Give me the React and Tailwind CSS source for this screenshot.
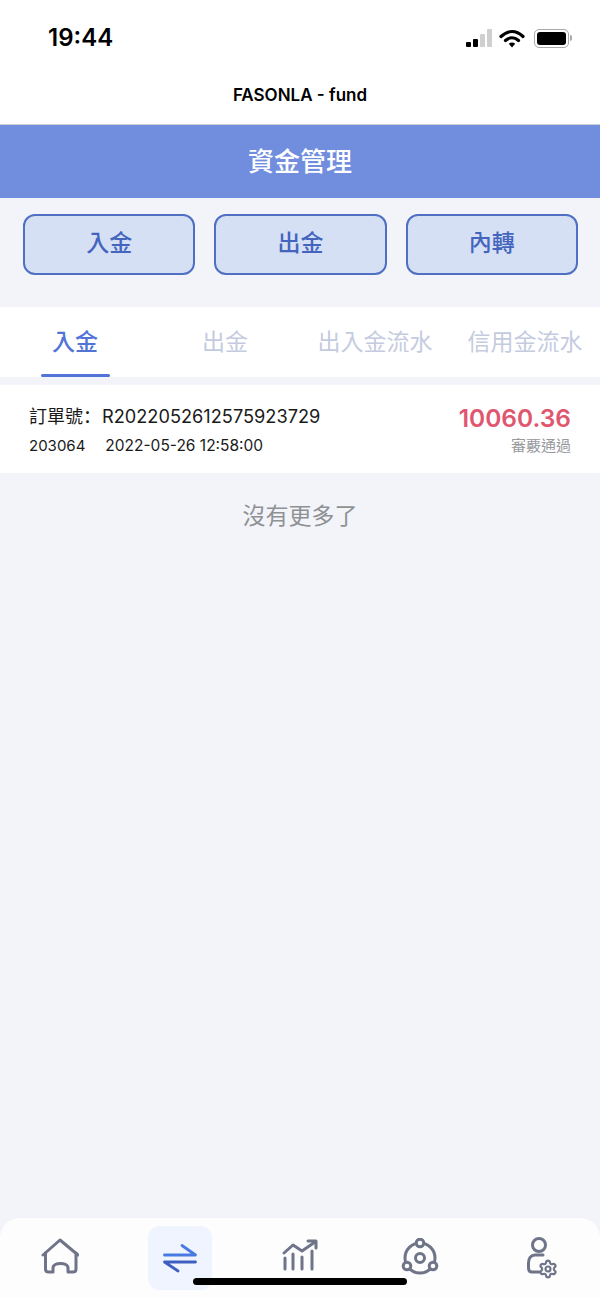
import { Settings } from "lucide-react";

function StatusIcons() {
  return (
    <div className="flex items-center gap-[5px]">
      <div className="flex items-end gap-[2px]">
        <div className="h-[5px] w-[5px] rounded-[1px] bg-black" />
        <div className="h-[8px] w-[5px] rounded-[1px] bg-black" />
        <div className="h-[13px] w-[5px] rounded-[1px] bg-[#cfcfcf]" />
        <div className="h-[18px] w-[5px] rounded-[1px] bg-[#cfcfcf]" />
      </div>
      <svg width="26" height="19" viewBox="0 0 26 19" className="ml-[2px]">
        <path d="M2 7.5C9 1 17 1 24 7.5" fill="none" stroke="#000" strokeWidth="3.2" strokeLinecap="round" />
        <path d="M6.5 11.5C10.5 8 15.5 8 19.5 11.5" fill="none" stroke="#000" strokeWidth="3.2" strokeLinecap="round" />
        <path d="M9.8 14.8C12 13 14 13 16.2 14.8L13 18.5Z" fill="#000" />
      </svg>
      <div className="ml-[4px] flex items-center">
        <div className="h-[19px] w-[35px] rounded-[5px] border border-[#a9a9a9] p-[2px]">
          <div className="h-full w-full rounded-[3px] bg-black" />
        </div>
        <div className="ml-[1px] h-[6px] w-[2px] rounded-r-sm bg-[#a9a9a9]" />
      </div>
    </div>
  );
}

function HomeIcon() {
  return (
    <svg width="38" height="38" viewBox="0 0 38 38" fill="none" stroke="#6f7488" strokeWidth="3" strokeLinecap="round" strokeLinejoin="round">
      <path d="M2 18L19 3L37 18" />
      <path d="M4.5 16V32Q4.5 35 7.5 35H12V31C12 25 27 25 27 31V35H32Q35 35 35 32V16" />
    </svg>
  );
}

function SwapIcon() {
  return (
    <svg width="34" height="30" viewBox="0 0 34 30" fill="none" strokeWidth="2.8" strokeLinecap="round" strokeLinejoin="round">
      <path d="M1.5 12H32.5L19 2.5" stroke="#4a7ae0" />
      <path d="M32.5 19H1.5L15 28" stroke="#3f5fc0" />
    </svg>
  );
}

function ChartIcon() {
  return (
    <svg width="38" height="36" viewBox="0 0 38 36" fill="none" stroke="#6f7488" strokeWidth="3" strokeLinecap="round" strokeLinejoin="round">
      <path d="M3 15L12 7L21 13L34 4" />
      <path d="M27 3H35V10" />
      <path d="M4 20V31M12 16V31M21 19V31M31 13V31" />
    </svg>
  );
}

function CircleIcon() {
  return (
    <svg width="38" height="38" viewBox="0 0 38 38" fill="none" stroke="#6f7488" strokeWidth="3">
      <circle cx="19" cy="20" r="15" />
      <circle cx="19" cy="20" r="4.5" />
      <circle cx="19" cy="5" r="3.8" fill="#fdfdfe" />
      <circle cx="6" cy="28" r="3.8" fill="#fdfdfe" />
      <circle cx="32" cy="28" r="3.8" fill="#fdfdfe" />
    </svg>
  );
}

function UserGearIcon() {
  return (
    <svg width="36" height="44" viewBox="0 0 36 44" fill="none" stroke="#6f7488" strokeWidth="3" strokeLinecap="round">
      <circle cx="17" cy="9" r="6.5" />
      <path d="M21 19H13C9 19 6.5 22 6.5 27V32C6.5 35 8 36 10 36H17" />
      <Settings x="16" y="23" width="20" height="20" strokeWidth="2.6" color="#6f7488" />
    </svg>
  );
}

export default function App() {
  const actions = ["入金", "出金", "內轉"];
  const tabs = ["入金", "出金", "出入金流水", "信用金流水"];

  return (
    <div className="relative flex h-[1298px] w-[600px] flex-col overflow-hidden bg-[#f2f4f9] font-[Inter,'Noto_Sans_CJK_TC',sans-serif]">
      <div className="h-[125px] border-b border-[#cfd0d3] bg-white">
        <div className="flex h-[76px] items-center justify-between pl-[48px] pr-[28px]">
          <span className="text-[24px] font-semibold text-black">19:44</span>
          <StatusIcons />
        </div>
        <div className="text-center text-[17px] font-semibold leading-[38px] text-black">FASONLA - fund</div>
      </div>

      <div className="flex h-[73px] items-center justify-center bg-[#718ddd] text-[26px] font-medium text-white">
        資金管理
      </div>

      <div className="grid grid-cols-3 gap-[19px] pl-[23px] pr-[22px] pt-[16px]">
        {actions.map((a) => (
          <div
            key={a}
            className="flex h-[61px] items-center justify-center rounded-[12px] border-2 border-[#4e6fc2] bg-[#d6e0f5] pb-[2px] text-[23px] font-medium text-[#4465bd]"
          >
            {a}
          </div>
        ))}
      </div>

      <div className="mt-[32px] flex h-[70px] bg-white">
        {tabs.map((t, i) => (
          <div
            key={t}
            className={
              i === 0
                ? "relative flex w-[150px] items-center justify-center text-[23px] font-medium text-[#5274d6]"
                : "relative flex w-[150px] items-center justify-center text-[23px] text-[#c4cbdf]"
            }
          >
            {t}
            {i === 0 && <div className="absolute bottom-0 left-[41px] h-[3px] w-[69px] rounded-full bg-[#5274d6]" />}
          </div>
        ))}
      </div>

      <div className="mt-[8px] flex h-[88px] justify-between bg-white pl-[29px] pr-[29px]">
        <div>
          <div className="pt-[16px] text-[18px] leading-[28px] text-[#1a1a1a]">
            訂單號<span className="font-['Noto_Sans_CJK_SC']">：</span>
            <span className="ml-[1px] text-[18.2px]">R2022052612575923729</span>
          </div>
          <div className="pt-[5px] text-[15px] leading-[20px] text-[#1a1a1a]">
            203064<span className="ml-[20px] text-[15.5px]">2022-05-26 12:58:00</span>
          </div>
        </div>
        <div className="text-right">
          <div className="pt-[16px] text-[24.5px] font-semibold leading-[34px] text-[#e0566f]">10060.36</div>
          <div className="pt-[1px] text-[15px] leading-[20px] text-[#98999e]">審覈通過</div>
        </div>
      </div>

      <div className="pt-[28px] text-center text-[23px] leading-[30px] text-[#8f9194]">沒有更多了</div>

      <div className="mt-auto flex h-[80px] justify-between rounded-t-[20px] bg-[#fdfdfe]">
        <div className="flex w-[120px] justify-center pt-[19px]"><HomeIcon /></div>
        <div className="flex w-[120px] justify-center pt-[8px]">
          <div className="flex h-[64px] w-[64px] items-center justify-center rounded-[12px] bg-[#f0f4fe]"><SwapIcon /></div>
        </div>
        <div className="flex w-[120px] justify-center pt-[20px]"><ChartIcon /></div>
        <div className="flex w-[120px] justify-center pt-[20px]"><CircleIcon /></div>
        <div className="flex w-[120px] justify-center pt-[18px]"><UserGearIcon /></div>
      </div>

      <div className="absolute bottom-[13px] left-[193px] h-[7px] w-[214px] rounded-full bg-black" />
    </div>
  );
}
